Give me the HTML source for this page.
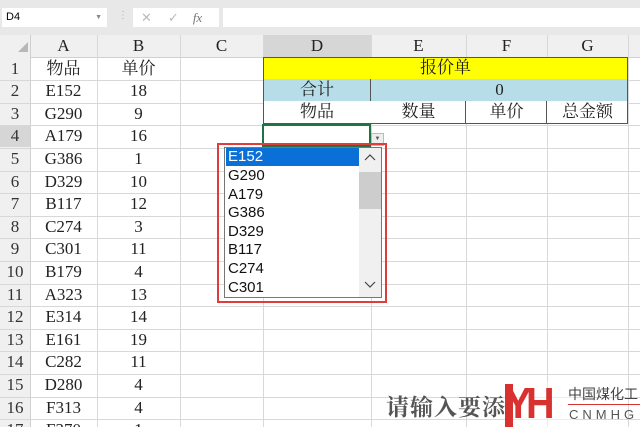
<!DOCTYPE html>
<html><head><meta charset="utf-8"><style>
html,body{margin:0;width:640px;height:427px;overflow:hidden;}
body{background:#fff;position:relative;font-family:"Liberation Serif","Noto Serif CJK SC",serif;}
.a{position:absolute;white-space:nowrap;}
.c{position:absolute;text-align:center;font-size:17px;line-height:22px;height:22px;color:#222;white-space:nowrap;}
.vl{position:absolute;width:1px;background:#d8d8d8;}
.hl{position:absolute;height:1px;background:#d8d8d8;}
.rh{position:absolute;left:0;width:30px;text-align:center;font-size:17px;line-height:22px;color:#333;}
.li{position:absolute;left:228px;font-family:"Liberation Sans","Noto Sans CJK SC",sans-serif;font-size:15px;line-height:18px;color:#111;}
</style></head><body>
<div class="a" style="left:0;top:0;width:640px;height:35px;background:#e8e8e8"></div>
<div class="a" style="left:2px;top:8px;width:105px;height:19px;background:#fff;font:11px 'Liberation Sans',sans-serif;line-height:19px;text-indent:4px">D4<span style="position:absolute;right:5px;font-size:7px;color:#888">▼</span></div>
<div class="a" style="left:118px;top:10px;color:#aaa;font-size:10px">⋮</div>
<div class="a" style="left:133px;top:8px;width:86px;height:19px;background:#fff;color:#bbb;font:13px 'Liberation Sans',sans-serif;line-height:19px"><span style="margin-left:8px">✕</span><span style="margin-left:16px">✓</span><span style="margin-left:14px;font-style:italic;font-family:'Liberation Serif';color:#777">fx</span></div>
<div class="a" style="left:223px;top:8px;width:417px;height:19px;background:#fff"></div>
<div class="a" style="left:0;top:35px;width:640px;height:22px;background:#f0f0f0;border-bottom:1px solid #d0d0d0"></div>
<div class="a" style="left:263px;top:35px;width:108px;height:22px;background:#d6d6d6;border-bottom:2px solid #217346"></div>
<div class="a" style="left:0;top:35px;width:30px;height:400px;background:#f0f0f0;border-right:1px solid #d0d0d0"></div>
<div class="a" style="left:0;top:125px;width:30px;height:22px;background:#d6d6d6"></div>
<div class="a" style="left:18px;top:42px;width:0;height:0;border-left:10px solid transparent;border-bottom:10px solid #b8b8b8"></div>
<div class="c" style="left:30px;top:35px;width:67px">A</div>
<div class="c" style="left:97px;top:35px;width:83px">B</div>
<div class="c" style="left:180px;top:35px;width:83px">C</div>
<div class="c" style="left:263px;top:35px;width:108px">D</div>
<div class="c" style="left:371px;top:35px;width:95px">E</div>
<div class="c" style="left:466px;top:35px;width:81px">F</div>
<div class="c" style="left:547px;top:35px;width:81px">G</div>
<div id="grid"></div>
<script>
var g=document.getElementById('grid'),h='';
var xs=[97,180,263,371,466,547,628];
xs.forEach(function(x){h+='<div class="vl" style="left:'+x+'px;top:35px;height:400px"></div>'});
var A=['物品','E152','G290','A179','G386','D329','B117','C274','C301','B179','A323','E314','E161','C282','D280','F313','F370'];
var B=['单价','18','9','16','1','10','12','3','11','4','13','14','19','11','4','4','1'];
for(var i=0;i<17;i++){var y=57.5+i*22.6;
h+='<div class="hl" style="left:0;top:'+Math.round(y+22.6)+'px;width:640px"></div>';
h+='<div class="rh" style="top:'+Math.round(y)+'px">'+(i+1)+'</div>';
h+='<div class="c" style="left:30px;top:'+Math.round(y)+'px;width:67px">'+A[i]+'</div>';
h+='<div class="c" style="left:97px;top:'+Math.round(y)+'px;width:83px">'+B[i]+'</div>';}
g.innerHTML=h;
</script>
<div class="a" style="left:263px;top:57px;width:365px;height:23px;background:#ffff00;border:1px solid #555;box-sizing:border-box"></div>
<div class="c" style="left:263px;top:57px;width:365px">报价单</div>
<div class="a" style="left:263px;top:79px;width:365px;height:23px;background:#b7dde8;border:1px solid #555;border-top:0;box-sizing:border-box"></div>
<div class="a" style="left:370px;top:79px;width:1px;height:45px;background:#555"></div>
<div class="c" style="left:263px;top:79px;width:108px">合计</div>
<div class="c" style="left:371px;top:79px;width:257px">0</div>
<div class="a" style="left:263px;top:101px;width:365px;height:23px;border:1px solid #555;border-top:0;box-sizing:border-box;background:#fff"></div>
<div class="a" style="left:465px;top:101px;width:1px;height:23px;background:#555"></div>
<div class="a" style="left:546px;top:101px;width:1px;height:23px;background:#555"></div>
<div class="c" style="left:263px;top:101px;width:108px">物品</div>
<div class="c" style="left:371px;top:101px;width:95px">数量</div>
<div class="c" style="left:466px;top:101px;width:81px">单价</div>
<div class="c" style="left:547px;top:101px;width:81px">总金额</div>
<div class="a" style="left:262px;top:124px;width:109px;height:23px;border:2px solid #217346;box-sizing:border-box;background:#fff"></div>
<div class="a" style="left:371px;top:133px;width:11px;height:11px;background:#eee;border:1px solid #bbb;font-size:6px;text-align:center;line-height:11px;color:#555">▼</div>
<div class="a" style="left:217px;top:143px;width:170px;height:160px;border:2px solid #e03c3c;box-sizing:border-box"></div>
<div class="a" style="left:224px;top:147px;width:158px;height:151px;background:#fff;border:1px solid #777;box-sizing:border-box"></div>
<div class="a" style="left:226px;top:148px;width:133px;height:18px;background:#0a6fd6"></div>
<div class="a" style="left:359px;top:148px;width:22px;height:149px;background:#f0f0f0"></div>
<div class="a" style="left:359px;top:172px;width:22px;height:37px;background:#cdcdcd"></div>
<svg class="a" style="left:364px;top:154px" width="12" height="8"><path d="M1 6 L6 1 L11 6" fill="none" stroke="#444" stroke-width="1.2"/></svg>
<svg class="a" style="left:364px;top:280px" width="12" height="8"><path d="M1 2 L6 7 L11 2" fill="none" stroke="#444" stroke-width="1.2"/></svg>
<div class="li" style="top:148px;color:#fff">E152</div>
<div class="li" style="top:167px">G290</div>
<div class="li" style="top:186px">A179</div>
<div class="li" style="top:204px">G386</div>
<div class="li" style="top:223px">D329</div>
<div class="li" style="top:241px">B117</div>
<div class="li" style="top:260px">C274</div>
<div class="li" style="top:279px">C301</div>
<div class="a" style="left:386px;top:392px;font:bold 23px/28px 'Noto Serif CJK SC',serif;color:#555;letter-spacing:1px">请输入要添</div>
<div class="a" style="left:507px;top:382px;width:68px;height:45px;background:rgba(255,255,255,.5)"></div>
<div class="a" style="left:505px;top:382px;font:bold 44px/44px 'Liberation Sans',sans-serif;color:#d8312f;letter-spacing:-6px;transform:scaleX(.9);transform-origin:left">YH</div>
<div class="a" style="left:505px;top:384px;width:8px;height:43px;background:#d8312f"></div>
<div class="a" style="left:568px;top:385px;font:14px/18px 'Noto Sans CJK SC',sans-serif;color:#444">中国煤化工</div>
<div class="a" style="left:568px;top:404px;width:72px;height:1px;background:#d8312f"></div>
<div class="a" style="left:569px;top:407px;font:13px/16px 'Liberation Sans',sans-serif;color:#555;letter-spacing:4px">CNMHG</div>
</body></html>
